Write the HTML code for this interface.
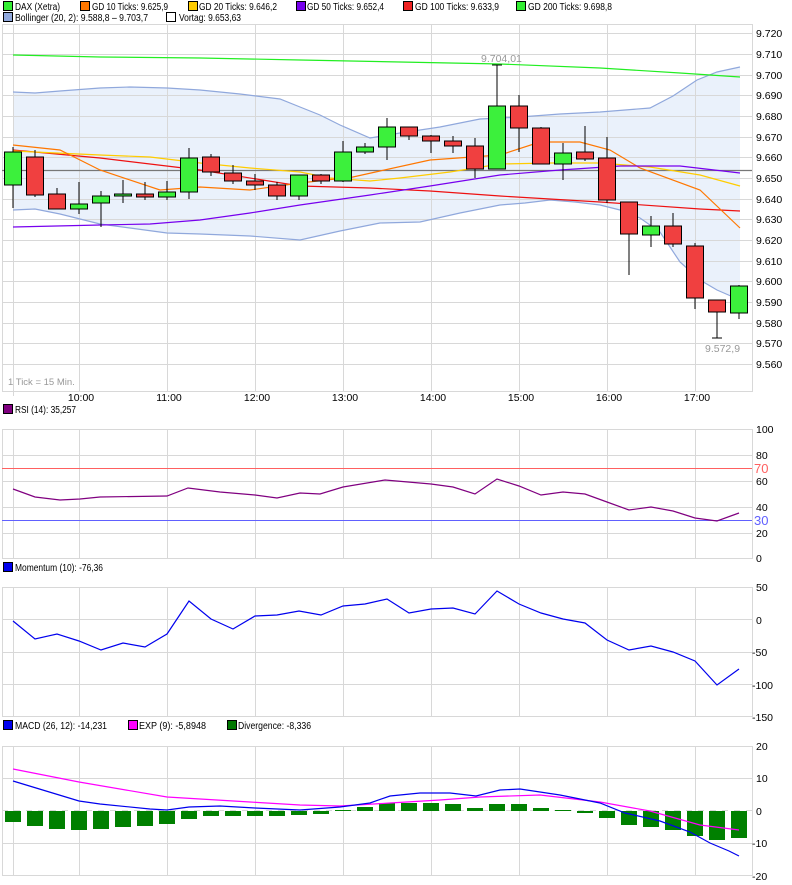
<!DOCTYPE html>
<html><head><meta charset="utf-8"><style>
html,body{margin:0;padding:0;background:#fff;}
svg{display:block;font-family:"Liberation Sans",sans-serif;font-size:10.5px;}
</style></head><body>
<svg width="792" height="885" viewBox="0 0 792 885" xmlns="http://www.w3.org/2000/svg" shape-rendering="crispEdges">
<!-- legends -->
<g stroke="#000" stroke-width="1">
<rect x="3.5" y="1.5" width="9" height="9" fill="#33ee33"/>
<rect x="80.5" y="1.5" width="9" height="9" fill="#ff7700"/>
<rect x="188.5" y="1.5" width="9" height="9" fill="#ffcc00"/>
<rect x="296.5" y="1.5" width="9" height="9" fill="#7700ee"/>
<rect x="403.5" y="1.5" width="9" height="9" fill="#ee2222"/>
<rect x="516.5" y="1.5" width="9" height="9" fill="#33ee33"/>
<rect x="3.5" y="12.5" width="9" height="9" fill="#90a8dc"/>
<rect x="166.5" y="12.5" width="9" height="9" fill="#fff"/>
<rect x="3.5" y="404.5" width="9" height="9" fill="#800080"/>
<rect x="3.5" y="562.5" width="9" height="9" fill="#0000ee"/>
<rect x="3.5" y="720.5" width="9" height="9" fill="#0000ee"/>
<rect x="128.5" y="720.5" width="9" height="9" fill="#ff00ff"/>
<rect x="227.5" y="720.5" width="9" height="9" fill="#007700"/>
</g>
<g fill="#000" font-size="10" lengthAdjust="spacingAndGlyphs">
<text x="15" y="10" textLength="45" lengthAdjust="spacingAndGlyphs">DAX (Xetra)</text>
<text x="92" y="10" textLength="76" lengthAdjust="spacingAndGlyphs">GD 10 Ticks: 9.625,9</text>
<text x="199" y="10" textLength="78" lengthAdjust="spacingAndGlyphs">GD 20 Ticks: 9.646,2</text>
<text x="307" y="10" textLength="77" lengthAdjust="spacingAndGlyphs">GD 50 Ticks: 9.652,4</text>
<text x="415" y="10" textLength="84" lengthAdjust="spacingAndGlyphs">GD 100 Ticks: 9.633,9</text>
<text x="528" y="10" textLength="84" lengthAdjust="spacingAndGlyphs">GD 200 Ticks: 9.698,8</text>
<text x="15" y="21" textLength="133" lengthAdjust="spacingAndGlyphs">Bollinger (20, 2): 9.588,8 – 9.703,7</text>
<text x="179" y="21" textLength="62" lengthAdjust="spacingAndGlyphs">Vortag: 9.653,63</text>
<text x="15" y="413" textLength="61" lengthAdjust="spacingAndGlyphs">RSI (14): 35,257</text>
<text x="15" y="571" textLength="88" lengthAdjust="spacingAndGlyphs">Momentum (10): -76,36</text>
<text x="15" y="729" textLength="92" lengthAdjust="spacingAndGlyphs">MACD (26, 12): -14,231</text>
<text x="139" y="729" textLength="67" lengthAdjust="spacingAndGlyphs">EXP (9): -5,8948</text>
<text x="238" y="729" textLength="73" lengthAdjust="spacingAndGlyphs">Divergence: -8,336</text>
</g>

<!-- MAIN PANEL -->
<polygon fill="#eaf1fb" points="13,92 35,93 60,91 100,88 130,87 167,88 200,90 240,94 280,99 300,107 320,115 340,125 370,138 400,133 440,127 480,119 520,117 560,114 600,112 650,108 673,96 697,80 717,72 740,67 740,300 717,290 700,280 680,262 660,232 640,218 620,210 600,205 575,202 550,200 525,203 500,205 460,213 420,222 380,223 340,231 300,240 250,236 200,234 167,233 130,228 100,224 60,214 35,209 13,210"/>
<g stroke="#d8d8d8" stroke-width="1">
<line x1="2" y1="24.5" x2="752" y2="24.5"/>
<line x1="2" y1="33.5" x2="752" y2="33.5"/><line x1="2" y1="54.5" x2="752" y2="54.5"/><line x1="2" y1="75.5" x2="752" y2="75.5"/><line x1="2" y1="95.5" x2="752" y2="95.5"/><line x1="2" y1="116.5" x2="752" y2="116.5"/><line x1="2" y1="137.5" x2="752" y2="137.5"/><line x1="2" y1="157.5" x2="752" y2="157.5"/><line x1="2" y1="178.5" x2="752" y2="178.5"/><line x1="2" y1="199.5" x2="752" y2="199.5"/><line x1="2" y1="219.5" x2="752" y2="219.5"/><line x1="2" y1="240.5" x2="752" y2="240.5"/><line x1="2" y1="261.5" x2="752" y2="261.5"/><line x1="2" y1="281.5" x2="752" y2="281.5"/><line x1="2" y1="302.5" x2="752" y2="302.5"/><line x1="2" y1="323.5" x2="752" y2="323.5"/><line x1="2" y1="343.5" x2="752" y2="343.5"/><line x1="2" y1="364.5" x2="752" y2="364.5"/>
<line x1="2" y1="391.5" x2="752" y2="391.5"/>
<line x1="2.5" y1="24" x2="2.5" y2="392"/><line x1="752.5" y1="24" x2="752.5" y2="392"/>
<line x1="13.5" y1="24" x2="13.5" y2="396"/><line x1="79.5" y1="24" x2="79.5" y2="392"/><line x1="167.5" y1="24" x2="167.5" y2="392"/><line x1="255.5" y1="24" x2="255.5" y2="392"/><line x1="343.5" y1="24" x2="343.5" y2="392"/><line x1="431.5" y1="24" x2="431.5" y2="392"/><line x1="519.5" y1="24" x2="519.5" y2="392"/><line x1="607.5" y1="24" x2="607.5" y2="392"/><line x1="695.5" y1="24" x2="695.5" y2="392"/>
</g>
<g fill="none" stroke-width="1.2" shape-rendering="auto">
<polyline stroke="#90a8dc" points="13,92 35,93 60,91 100,88 130,87 167,88 200,90 240,94 280,99 300,107 320,115 340,125 370,138 400,133 440,127 480,119 520,117 560,114 600,112 650,108 673,96 697,80 717,72 740,67"/>
<polyline stroke="#90a8dc" points="13,210 35,209 60,214 100,224 130,228 167,233 200,234 250,236 300,240 340,231 380,223 420,222 460,213 500,205 525,203 550,200 575,202 600,205 620,210 640,218 660,232 680,262 700,280 717,290 740,300"/>
<polyline stroke="#22ee22" points="13,55 100,57 200,58 300,60 400,62 500,64 600,68 680,73 740,77"/>
<line stroke="#777" x1="2" y1="170.5" x2="752" y2="170.5"/>
<polyline stroke="#ee1111" points="13,150 100,158 200,170 300,186 370,188 430,191 500,196 600,202 700,209 740,211"/>
<polyline stroke="#ffcc00" points="13,151 100,155 150,157 200,163 250,168 300,172 330,178 370,181 400,178 450,172 500,164 550,163 600,163 650,167 700,175 740,186"/>
<polyline stroke="#ff7700" points="13,145 60,150 100,170 160,190 200,187 250,190 300,183 353,177 380,171 430,160 500,155 540,142 580,142 610,150 640,168 700,190 740,228"/>
<polyline stroke="#7700ee" points="13,227 100,225 150,224 200,220 250,213 300,205 370,195 430,186 500,175 560,170 620,166 680,166 740,173"/>
</g>
<!-- candles -->
<g stroke="#000" stroke-width="1.3">
<line x1="13" y1="147" x2="13" y2="208"/><line x1="35" y1="150" x2="35" y2="197"/><line x1="57" y1="188" x2="57" y2="209"/><line x1="79" y1="182" x2="79" y2="214"/><line x1="101" y1="191" x2="101" y2="227"/><line x1="123" y1="180" x2="123" y2="203"/><line x1="145" y1="182" x2="145" y2="200"/><line x1="167" y1="181" x2="167" y2="200"/><line x1="189" y1="148" x2="189" y2="199"/><line x1="211" y1="154" x2="211" y2="176"/><line x1="233" y1="165" x2="233" y2="184"/><line x1="255" y1="174" x2="255" y2="190"/><line x1="277" y1="182" x2="277" y2="200"/><line x1="299" y1="175" x2="299" y2="200"/><line x1="321" y1="174" x2="321" y2="184"/><line x1="343" y1="141" x2="343" y2="182"/><line x1="365" y1="143" x2="365" y2="154"/><line x1="387" y1="118" x2="387" y2="160"/><line x1="409" y1="127" x2="409" y2="140"/><line x1="431" y1="135" x2="431" y2="153"/><line x1="453" y1="136" x2="453" y2="153"/><line x1="475" y1="138" x2="475" y2="178"/><line x1="497" y1="65" x2="497" y2="169"/><line x1="519" y1="95" x2="519" y2="152"/><line x1="541" y1="127" x2="541" y2="164"/><line x1="563" y1="143" x2="563" y2="180"/><line x1="585" y1="126" x2="585" y2="161"/><line x1="607" y1="137" x2="607" y2="203"/><line x1="629" y1="202" x2="629" y2="275"/><line x1="651" y1="216" x2="651" y2="247"/><line x1="673" y1="213" x2="673" y2="247"/><line x1="695" y1="243" x2="695" y2="309"/><line x1="717" y1="300" x2="717" y2="338"/><line x1="739" y1="285" x2="739" y2="319"/>
<line x1="492" y1="65" x2="502" y2="65"/><line x1="712" y1="338" x2="722" y2="338"/>
</g>
<g stroke="#000" stroke-width="1.3">
<rect x="4.5" y="152" width="17" height="33" fill="#3cf03c"/>
<rect x="26.5" y="157" width="17" height="38" fill="#f04040"/>
<rect x="48.5" y="194" width="17" height="15" fill="#f04040"/>
<rect x="70.5" y="204" width="17" height="5" fill="#3cf03c"/>
<rect x="92.5" y="196" width="17" height="7" fill="#3cf03c"/>
<rect x="114.5" y="194" width="17" height="2" fill="#3cf03c"/>
<rect x="136.5" y="194" width="17" height="3" fill="#f04040"/>
<rect x="158.5" y="192" width="17" height="5" fill="#3cf03c"/>
<rect x="180.5" y="158" width="17" height="34" fill="#3cf03c"/>
<rect x="202.5" y="157" width="17" height="15" fill="#f04040"/>
<rect x="224.5" y="173" width="17" height="8" fill="#f04040"/>
<rect x="246.5" y="181" width="17" height="4" fill="#f04040"/>
<rect x="268.5" y="185" width="17" height="11" fill="#f04040"/>
<rect x="290.5" y="175" width="17" height="21" fill="#3cf03c"/>
<rect x="312.5" y="175" width="17" height="6" fill="#f04040"/>
<rect x="334.5" y="152" width="17" height="29" fill="#3cf03c"/>
<rect x="356.5" y="147" width="17" height="5" fill="#3cf03c"/>
<rect x="378.5" y="127" width="17" height="20" fill="#3cf03c"/>
<rect x="400.5" y="127" width="17" height="9" fill="#f04040"/>
<rect x="422.5" y="136" width="17" height="5" fill="#f04040"/>
<rect x="444.5" y="141" width="17" height="5" fill="#f04040"/>
<rect x="466.5" y="146" width="17" height="23" fill="#f04040"/>
<rect x="488.5" y="106" width="17" height="63" fill="#3cf03c"/>
<rect x="510.5" y="106" width="17" height="22" fill="#f04040"/>
<rect x="532.5" y="128" width="17" height="36" fill="#f04040"/>
<rect x="554.5" y="153" width="17" height="11" fill="#3cf03c"/>
<rect x="576.5" y="152" width="17" height="7" fill="#f04040"/>
<rect x="598.5" y="158" width="17" height="42" fill="#f04040"/>
<rect x="620.5" y="202" width="17" height="32" fill="#f04040"/>
<rect x="642.5" y="226" width="17" height="9" fill="#3cf03c"/>
<rect x="664.5" y="226" width="17" height="18" fill="#f04040"/>
<rect x="686.5" y="246" width="17" height="52" fill="#f04040"/>
<rect x="708.5" y="300" width="17" height="12" fill="#f04040"/>
<rect x="730.5" y="286" width="17" height="27" fill="#3cf03c"/>
</g>
<g fill="#999">
<text x="481" y="62">9.704,01</text>
<text x="705" y="352">9.572,9</text>
<text x="8" y="385" font-size="9.5">1 Tick = 15 Min.</text>
</g>
<g fill="#000">
<text x="756" y="37">9.720</text><text x="756" y="58">9.710</text><text x="756" y="79">9.700</text><text x="756" y="99">9.690</text><text x="756" y="120">9.680</text><text x="756" y="141">9.670</text><text x="756" y="161">9.660</text><text x="756" y="182">9.650</text><text x="756" y="203">9.640</text><text x="756" y="223">9.630</text><text x="756" y="244">9.620</text><text x="756" y="265">9.610</text><text x="756" y="285">9.600</text><text x="756" y="306">9.590</text><text x="756" y="327">9.580</text><text x="756" y="347">9.570</text><text x="756" y="368">9.560</text>
<g text-anchor="middle"><text x="81" y="401">10:00</text><text x="169" y="401">11:00</text><text x="257" y="401">12:00</text><text x="345" y="401">13:00</text><text x="433" y="401">14:00</text><text x="521" y="401">15:00</text><text x="609" y="401">16:00</text><text x="697" y="401">17:00</text></g>
</g>

<!-- RSI -->
<g stroke="#d8d8d8">
<line x1="2" y1="429.5" x2="752" y2="429.5"/><line x1="2" y1="455.5" x2="752" y2="455.5"/><line x1="2" y1="481.5" x2="752" y2="481.5"/><line x1="2" y1="507.5" x2="752" y2="507.5"/><line x1="2" y1="533.5" x2="752" y2="533.5"/><line x1="2" y1="558.5" x2="752" y2="558.5"/>
<line x1="2.5" y1="429" x2="2.5" y2="559"/><line x1="752.5" y1="429" x2="752.5" y2="559"/><line x1="13.5" y1="429" x2="13.5" y2="559"/><line x1="79.5" y1="429" x2="79.5" y2="559"/><line x1="167.5" y1="429" x2="167.5" y2="559"/><line x1="255.5" y1="429" x2="255.5" y2="559"/><line x1="343.5" y1="429" x2="343.5" y2="559"/><line x1="431.5" y1="429" x2="431.5" y2="559"/><line x1="519.5" y1="429" x2="519.5" y2="559"/><line x1="607.5" y1="429" x2="607.5" y2="559"/><line x1="695.5" y1="429" x2="695.5" y2="559"/>
</g>
<line x1="2" y1="468.5" x2="752" y2="468.5" stroke="#ff6060"/>
<line x1="2" y1="520.5" x2="752" y2="520.5" stroke="#6060ff"/>
<polyline fill="none" stroke="#800080" stroke-width="1.2" shape-rendering="auto" points="13,489 35,497 60,500 80,499 100,497 167,496 188,488 220,492 255,495 277,498 300,493 320,494 343,487 385,480 431,484 453,487 475,494 497,479 519,486 541,495 563,492 585,494 607,502 629,510 651,507 673,511 695,518 717,521 739,513"/>
<g fill="#000"><text x="756" y="433">100</text><text x="756" y="459">80</text><text x="756" y="485">60</text><text x="756" y="511">40</text><text x="756" y="537">20</text><text x="756" y="562">0</text></g>
<text x="754" y="473" fill="#ff6060" font-size="13">70</text>
<text x="754" y="525" fill="#6060ff" font-size="13">30</text>

<!-- MOMENTUM -->
<g stroke="#d8d8d8">
<line x1="2" y1="587.5" x2="752" y2="587.5"/><line x1="2" y1="619.5" x2="752" y2="619.5"/><line x1="2" y1="652.5" x2="752" y2="652.5"/><line x1="2" y1="684.5" x2="752" y2="684.5"/><line x1="2" y1="716.5" x2="752" y2="716.5"/>
<line x1="2.5" y1="587" x2="2.5" y2="717"/><line x1="752.5" y1="587" x2="752.5" y2="717"/><line x1="13.5" y1="587" x2="13.5" y2="717"/><line x1="79.5" y1="587" x2="79.5" y2="717"/><line x1="167.5" y1="587" x2="167.5" y2="717"/><line x1="255.5" y1="587" x2="255.5" y2="717"/><line x1="343.5" y1="587" x2="343.5" y2="717"/><line x1="431.5" y1="587" x2="431.5" y2="717"/><line x1="519.5" y1="587" x2="519.5" y2="717"/><line x1="607.5" y1="587" x2="607.5" y2="717"/><line x1="695.5" y1="587" x2="695.5" y2="717"/>
</g>
<polyline fill="none" stroke="#0000ee" stroke-width="1.2" shape-rendering="auto" points="13,621 35,639 57,634 79,641 101,650 123,643 145,647 167,634 189,601 211,619 233,629 255,616 277,615 299,611 321,615 343,606 365,604 387,599 409,613 431,609 453,608 475,614 497,591 519,604 541,613 563,619 585,623 607,640 629,650 651,646 673,652 695,661 717,685 739,669"/>
<g fill="#000"><text x="756" y="591">50</text><text x="756" y="624">0</text><text x="752" y="656">-50</text><text x="752" y="689">-100</text><text x="752" y="721">-150</text></g>

<!-- MACD -->
<g stroke="#d8d8d8">
<line x1="2" y1="746.5" x2="752" y2="746.5"/><line x1="2" y1="778.5" x2="752" y2="778.5"/><line x1="2" y1="843.5" x2="752" y2="843.5"/><line x1="2" y1="875.5" x2="752" y2="875.5"/>
<line x1="2.5" y1="746" x2="2.5" y2="876"/><line x1="752.5" y1="746" x2="752.5" y2="876"/><line x1="13.5" y1="746" x2="13.5" y2="876"/><line x1="79.5" y1="746" x2="79.5" y2="876"/><line x1="167.5" y1="746" x2="167.5" y2="876"/><line x1="255.5" y1="746" x2="255.5" y2="876"/><line x1="343.5" y1="746" x2="343.5" y2="876"/><line x1="431.5" y1="746" x2="431.5" y2="876"/><line x1="519.5" y1="746" x2="519.5" y2="876"/><line x1="607.5" y1="746" x2="607.5" y2="876"/><line x1="695.5" y1="746" x2="695.5" y2="876"/>
</g>
<line x1="2" y1="810.5" x2="752" y2="810.5" stroke="#d8d8d8" stroke-dasharray="6,6"/>
<g fill="#008000">
<rect x="5" y="811" width="16" height="11"/><rect x="27" y="811" width="16" height="15"/><rect x="49" y="811" width="16" height="18"/><rect x="71" y="811" width="16" height="19"/><rect x="93" y="811" width="16" height="18"/><rect x="115" y="811" width="16" height="16"/><rect x="137" y="811" width="16" height="15"/><rect x="159" y="811" width="16" height="13"/><rect x="181" y="811" width="16" height="8"/><rect x="203" y="811" width="16" height="5"/><rect x="225" y="811" width="16" height="5"/><rect x="247" y="811" width="16" height="5"/><rect x="269" y="811" width="16" height="5"/><rect x="291" y="811" width="16" height="4"/><rect x="313" y="811" width="16" height="3"/><rect x="335" y="810" width="16" height="1"/>
<rect x="357" y="807" width="16" height="4"/><rect x="379" y="803" width="16" height="8"/><rect x="401" y="803" width="16" height="8"/><rect x="423" y="803" width="16" height="8"/><rect x="445" y="804" width="16" height="7"/><rect x="467" y="808" width="16" height="3"/><rect x="489" y="804" width="16" height="7"/><rect x="511" y="804" width="16" height="7"/><rect x="533" y="808" width="16" height="3"/><rect x="555" y="810" width="16" height="1"/>
<rect x="577" y="811" width="16" height="2"/><rect x="599" y="811" width="16" height="7"/><rect x="621" y="811" width="16" height="14"/><rect x="643" y="811" width="16" height="16"/><rect x="665" y="811" width="16" height="19"/><rect x="687" y="811" width="16" height="25"/><rect x="709" y="811" width="16" height="29"/><rect x="731" y="811" width="16" height="27"/>
</g>
<g fill="none" stroke-width="1.2" shape-rendering="auto">
<polyline stroke="#ff00ff" points="13,769 79,782 167,797 250,802 300,805 340,806 390,803 440,800 480,797 540,795 600,802 650,811 700,825 739,830"/>
<polyline stroke="#0000ee" points="13,781 79,801 100,804 150,809 167,810 189,807 220,806 255,808 300,810 340,807 370,803 390,796 420,793 450,793 476,796 500,790 520,789 560,795 600,803 625,813 660,821 690,832 710,843 729,851 739,856"/>
</g>
<g fill="#000"><text x="756" y="750">20</text><text x="756" y="782">10</text><text x="756" y="815">0</text><text x="752" y="847">-10</text><text x="752" y="880">-20</text></g>
</svg>
</body></html>
